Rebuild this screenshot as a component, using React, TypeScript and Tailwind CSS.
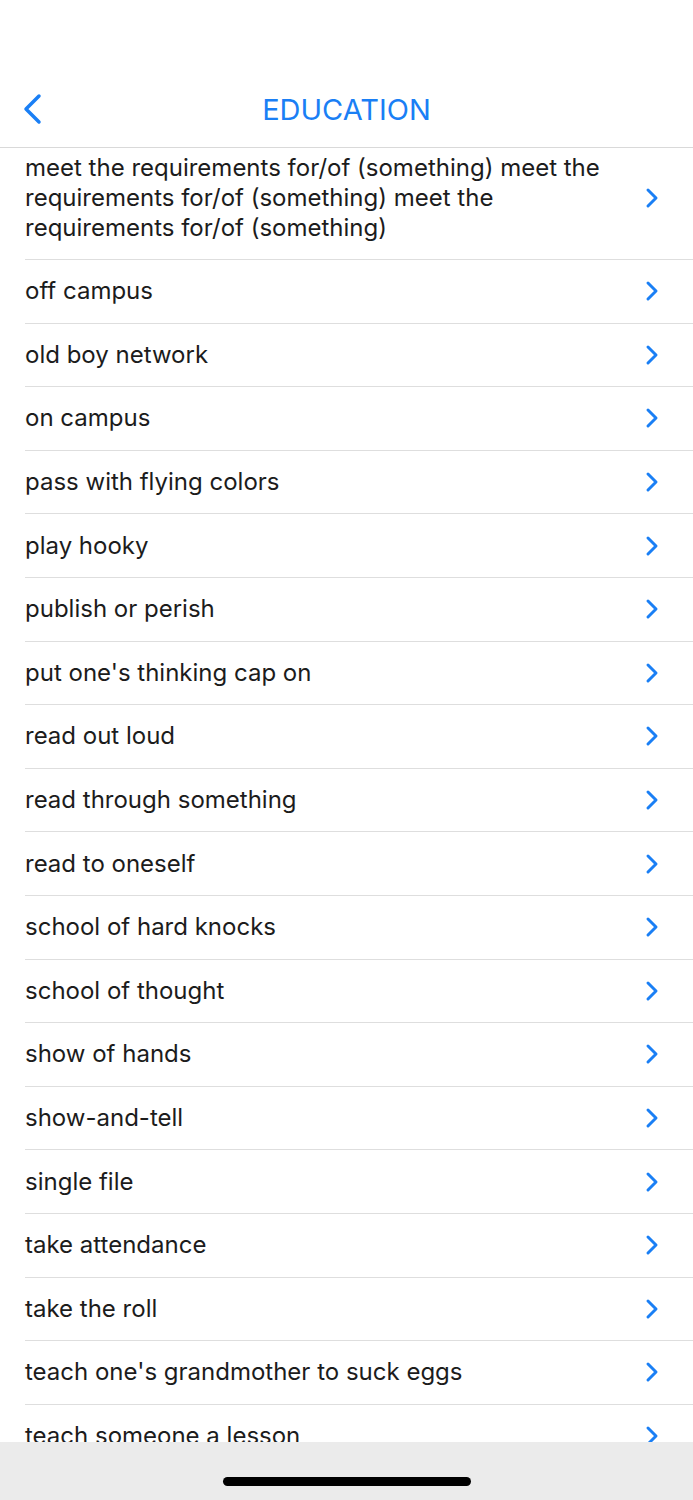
import React from "react";

const items = [
  "off campus",
  "old boy network",
  "on campus",
  "pass with flying colors",
  "play hooky",
  "publish or perish",
  "put one's thinking cap on",
  "read out loud",
  "read through something",
  "read to oneself",
  "school of hard knocks",
  "school of thought",
  "show of hands",
  "show-and-tell",
  "single file",
  "take attendance",
  "take the roll",
  "teach one's grandmother to suck eggs",
  "teach someone a lesson",
];

function Chevron() {
  return (
    <svg width="14" height="22" viewBox="0 0 14 22" className="shrink-0">
      <path d="M3 3 L11 11 L3 19" fill="none" stroke="#1a7ff5" strokeWidth="3" strokeLinecap="round" strokeLinejoin="round" />
    </svg>
  );
}

export default function App() {
  return (
    <div className="w-[693px] h-[1500px] bg-white overflow-hidden relative" style={{ fontFamily: "Inter, 'Noto Sans', sans-serif" }}>
      <div className="h-[72px]" />
      <div className="h-[76px] border-b border-[#d9d9d9] relative flex items-center justify-center">
        <svg width="24" height="36" viewBox="0 0 24 36" className="absolute left-[20px] top-[20px]">
          <path d="M19 4 L6 17 L19 30" fill="none" stroke="#1a7ff5" strokeWidth="3.5" strokeLinecap="round" strokeLinejoin="round" />
        </svg>
        <div className="text-[29px] text-[#1a7ff5]">EDUCATION</div>
      </div>
      <div className="pl-[25px]">
        <div className="h-[112px] border-b border-[#dedede] flex items-center pr-[34px] pb-[11px]">
          <div className="flex-1 text-[24px] leading-[30px] text-[#1c1c1c] pr-[30px]">
            meet the requirements for/of (something) meet the requirements for/of (something) meet the requirements for/of (something)
          </div>
          <Chevron />
        </div>
        {items.map((t) => (
          <div key={t} className="h-[63.6px] border-b border-[#dedede] flex items-center pr-[34px]">
            <div className="flex-1 text-[24px] text-[#1c1c1c]">{t}</div>
            <Chevron />
          </div>
        ))}
      </div>
      <div className="absolute left-0 right-0 bottom-0 h-[58px] bg-[#ebebeb] flex justify-center">
        <div className="mt-[35px] w-[248px] h-[9px] rounded-full bg-black" />
      </div>
    </div>
  );
}
